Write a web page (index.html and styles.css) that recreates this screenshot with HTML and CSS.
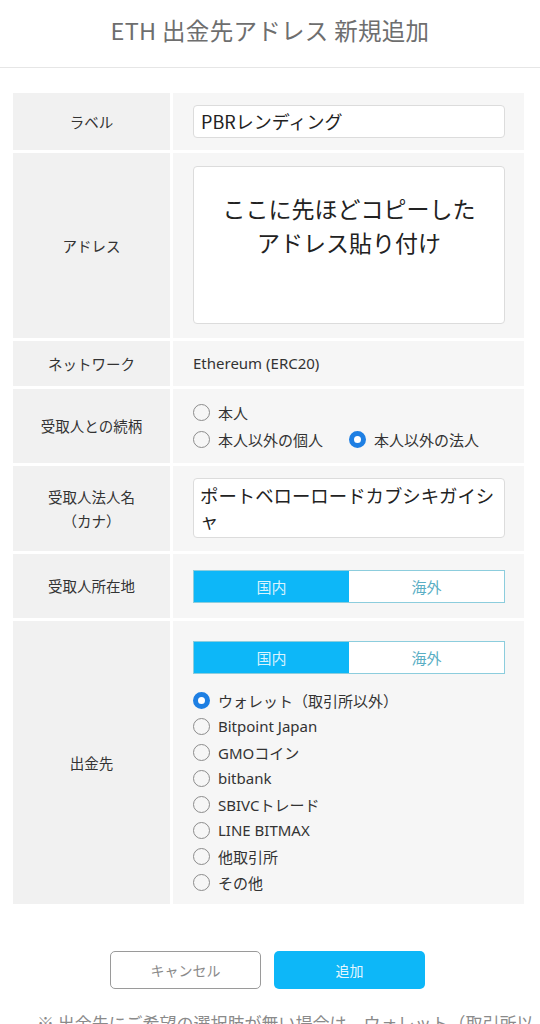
FILE: index.html
```html
<!DOCTYPE html>
<html lang="ja">
<head>
<meta charset="utf-8">
<title>ETH 出金先アドレス 新規追加</title>
<link rel="stylesheet" href="styles.css">
</head>
<body>
<header class="title-bar">
  <h1 class="title">ETH 出金先アドレス 新規追加</h1>
</header>

<main class="form">
  <div class="label">ラベル</div>
  <div class="value value-label">
    <div class="input input-single">PBRレンディング</div>
  </div>

  <div class="label">アドレス</div>
  <div class="value value-address">
    <div class="textarea">ここに先ほどコピーした<br>アドレス貼り付け</div>
  </div>

  <div class="label">ネットワーク</div>
  <div class="value value-text">Ethereum (ERC20)</div>

  <div class="label">受取人との続柄</div>
  <div class="value value-relation">
    <div class="radio-line">
      <span class="radio"><span class="circle"></span>本人</span>
    </div>
    <div class="radio-line">
      <span class="radio"><span class="circle"></span>本人以外の個人</span>
      <span class="radio"><span class="circle checked"></span>本人以外の法人</span>
    </div>
  </div>

  <div class="label">受取人法人名<br>（カナ）</div>
  <div class="value value-name">
    <div class="input input-multi">ポートベローロードカブシキガイシャ</div>
  </div>

  <div class="label">受取人所在地</div>
  <div class="value value-seg">
    <div class="seg">
      <span class="seg-item active">国内</span>
      <span class="seg-item">海外</span>
    </div>
  </div>

  <div class="label">出金先</div>
  <div class="value value-dest">
    <div class="seg">
      <span class="seg-item active">国内</span>
      <span class="seg-item">海外</span>
    </div>
    <div class="radio-list">
      <span class="radio"><span class="circle checked"></span>ウォレット（取引所以外）</span>
      <span class="radio"><span class="circle"></span>Bitpoint Japan</span>
      <span class="radio"><span class="circle"></span>GMOコイン</span>
      <span class="radio"><span class="circle"></span>bitbank</span>
      <span class="radio"><span class="circle"></span>SBIVCトレード</span>
      <span class="radio"><span class="circle"></span>LINE BITMAX</span>
      <span class="radio"><span class="circle"></span>他取引所</span>
      <span class="radio"><span class="circle"></span>その他</span>
    </div>
  </div>
</main>

<div class="actions">
  <button class="btn btn-cancel">キャンセル</button>
  <button class="btn btn-add">追加</button>
</div>

<p class="note">※ 出金先にご希望の選択肢が無い場合は、ウォレット（取引所以外）を選択してください。</p>
</body>
</html>
```

FILE: styles.css
```css
* { box-sizing: border-box; }

html, body {
  margin: 0;
  padding: 0;
  background: #fff;
}

body {
  font-family: "Noto Sans", "Noto Sans CJK JP", sans-serif;
  color: #333;
}

.title-bar {
  height: 68px;
  border-bottom: 1px solid #e6e6e6;
  display: flex;
  align-items: center;
  justify-content: center;
}

.title {
  margin: 0;
  font-family: "Noto Sans CJK JP", sans-serif;
  font-weight: 400;
  font-size: 23.5px;
  color: #6e6e6e;
  letter-spacing: 0.3px;
  padding-bottom: 8px;
}

.form {
  margin: 25px 16px 0 13px;
  display: grid;
  grid-template-columns: 157px 1fr;
  gap: 3px;
}

.label {
  background: #f1f1f1;
  display: flex;
  align-items: center;
  justify-content: center;
  text-align: center;
  font-family: "Noto Sans CJK JP", sans-serif;
  font-size: 14.5px;
  line-height: 24px;
  color: #333;
}

.value {
  background: #f6f6f6;
  padding: 12px 19px 12px 20px;
}

.input {
  background: #fff;
  border: 1px solid #dcdcdc;
  border-radius: 4px;
  font-family: "Noto Sans CJK JP", sans-serif;
  color: #222;
}

.input-single {
  height: 33px;
  padding: 0 7px;
  font-size: 18px;
  line-height: 31px;
}

.value-address {
  padding: 13px 19px 14px 20px;
}

.textarea {
  height: 158px;
  background: #fff;
  border: 1px solid #dcdcdc;
  border-radius: 4px;
  padding-top: 24px;
  text-align: center;
  font-family: "Noto Sans CJK JP", sans-serif;
  font-size: 23px;
  line-height: 34px;
  color: #222;
}

.value-text {
  padding: 12px 20px;
  font-size: 15px;
  line-height: 21px;
  color: #333;
}

.value-relation {
  padding: 10px 20px;
}

.radio-line {
  display: flex;
  gap: 26px;
  height: 27px;
  align-items: center;
}

.radio {
  display: inline-flex;
  align-items: center;
  gap: 8px;
  font-family: "Noto Sans", "Noto Sans CJK JP", sans-serif;
  font-size: 15px;
  color: #333;
}

.circle {
  width: 17px;
  height: 17px;
  border-radius: 50%;
  border: 1.5px solid #8c8c8c;
  background: transparent;
  flex: none;
}

.circle.checked {
  border: 5px solid #1e7fe3;
  background: #fff;
}

.value-name {
  padding: 12px 19px 13px 20px;
}

.input-multi {
  padding: 4px 4px 4px 6px;
  font-size: 18.4px;
  line-height: 25px;
}

.value-seg {
  padding: 16px 19px 15px 20px;
}

.seg {
  display: grid;
  grid-template-columns: 1fr 1fr;
  height: 33px;
  border: 1px solid #8ccddd;
  background: #fff;
}

.seg-item {
  display: flex;
  align-items: center;
  justify-content: center;
  font-family: "Noto Sans CJK JP", sans-serif;
  font-size: 15px;
  color: #5aaec4;
}

.seg-item.active {
  background: #0db7f8;
  color: rgba(255, 255, 255, 0.85);
}

.value-dest {
  padding: 20px 19px 9px 20px;
}

.radio-list {
  margin-top: 13px;
  display: flex;
  flex-direction: column;
}

.radio-list .radio {
  height: 26px;
}

.actions {
  margin-top: 47px;
  display: flex;
  justify-content: center;
  gap: 13px;
  padding-right: 5px;
}

.btn {
  width: 151px;
  height: 38px;
  border-radius: 5px;
  font-family: "Noto Sans CJK JP", sans-serif;
  font-size: 14px;
  cursor: pointer;
}

.btn-cancel {
  background: #fff;
  border: 1.5px solid #9a9a9a;
  color: #8a8a8a;
}

.btn-add {
  background: #0db7f8;
  border: none;
  color: rgba(255, 255, 255, 0.9);
}

.note {
  margin: 21px 0 0;
  padding: 0 6px 0 37px;
  font-family: "Noto Sans CJK JP", sans-serif;
  font-size: 17px;
  line-height: 26px;
  color: #8a8a8a;
}
```
